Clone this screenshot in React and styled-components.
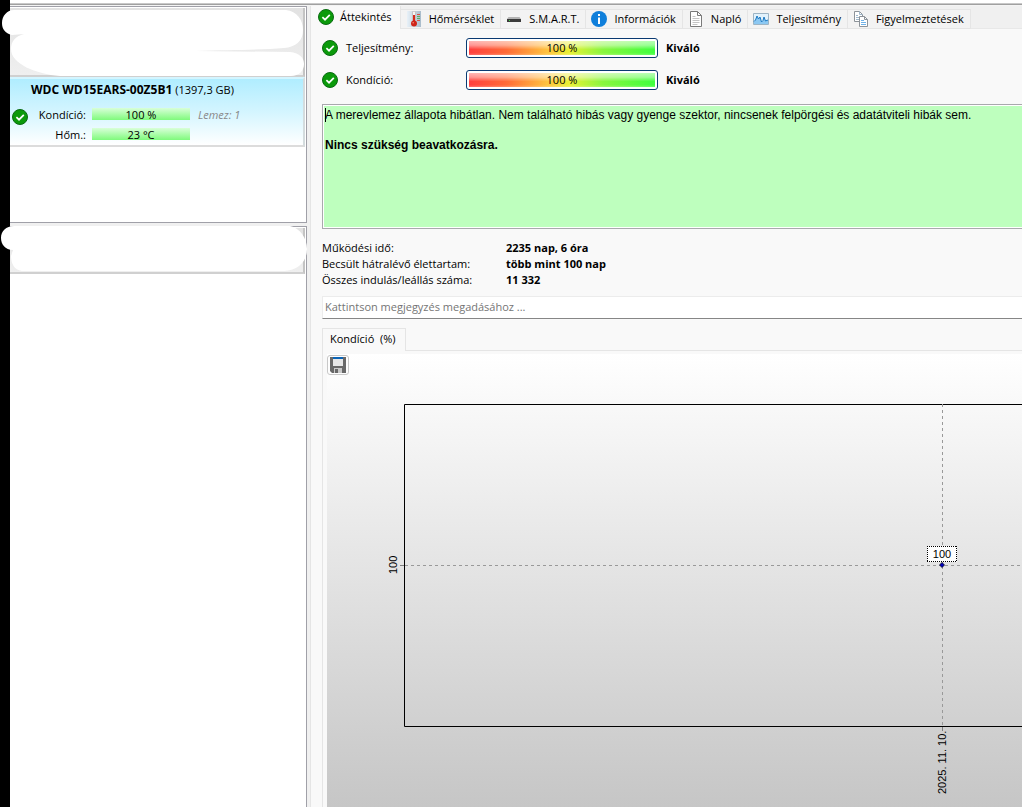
import React, { useState } from "react";
import styled, { createGlobalStyle } from "styled-components";

// ---------- STYLES ----------
const GlobalStyle = createGlobalStyle`
  * {
    box-sizing: border-box;
  }

  body {
    margin: 0;
    background: #f0f0f0;
    color: #000;
    font-family: "Open Sans", "Noto Sans", sans-serif;
    font-size: 11px;
    line-height: 16px;
    overflow: hidden;
  }

  button, input {
    font: inherit;
    color: inherit;
  }
`;

const Window = styled.div`
  display: flex;
  flex-direction: column;
  height: 100vh;
  border-left: 10px solid #000;
`;

const TopEdge = styled.div`
  flex: none;
  height: 6px;
  background: linear-gradient(#fff 3px, #c8c8c8 3px, #c8c8c8 4px, #a0a0a0 4px, #a0a0a0 5px, #f4f4f4 5px);
`;

const Columns = styled.div`
  display: flex;
  flex: 1;
  min-height: 0;
`;

const Sidebar = styled.aside`
  display: flex;
  flex-direction: column;
  flex: none;
  gap: 3px;
  width: 297px;
`;

const Pane = styled.section`
  position: relative;
  flex: ${(p) => (p.$grow ? "1" : "none")};
  min-height: 217px;
  padding: 1px 1px 0 0;
  background: #fff;
  border: 1px solid #a0a0a8;
  border-left: 0;
  border-bottom-width: ${(p) => (p.$grow ? "0" : "1px")};
`;

const HiddenItem = styled.div`
  height: ${(p) => p.$height}px;
  background: linear-gradient(#e2e2e2, #efefef);
  border-right: 2px solid #c4c4c4;
  border-bottom: 2px solid #d0d0d0;
`;

const Cover = styled.svg`
  position: absolute;
  top: -1px;
  left: -10px;
  pointer-events: none;
`;

const DiskItem = styled.div`
  padding: 3px 0 2px 2px;
  background: linear-gradient(#b0edff, #d4f5ff 50%, #fff);
  border-top: 2px solid #d4f5ff;
  border-right: 2px solid #d4dcde;
  border-bottom: 2px solid #dcdcdc;
`;

const DiskTitle = styled.div`
  padding-left: 19px;
  margin-bottom: 9px;

  b {
    font-size: 12px;
  }
`;

const DiskBody = styled.div`
  display: flex;
  align-items: flex-start;

  > svg {
    margin-top: 2px;
  }
`;

const DiskStats = styled.div`
  display: grid;
  grid-template-columns: 58px 98px auto;
  column-gap: 6px;
  row-gap: 4px;
`;

const StatLabel = styled.span`
  text-align: right;
`;

const StatBar = styled.span`
  height: 12px;
  margin-top: 1px;
  line-height: 14px;
  text-align: center;
  background: linear-gradient(#d9ffd9, #7ffa7c);
`;

const DiskNumber = styled.em`
  color: #888;
  padding-left: 2px;
`;

const Main = styled.main`
  flex: 1;
  min-width: 0;
  margin-left: 3px;
  background: #f9f9f9;
  border-left: 1px solid #e5e5e5;
`;

const TabBar = styled.div`
  display: flex;
  align-items: flex-end;
  height: 23px;
  background: #f0f0f0;
  box-shadow: inset 0 -1px #e8e8e8;
`;

const Tab = styled.button`
  display: flex;
  align-items: center;
  flex: none;
  gap: ${(p) => (p.$active ? "6px" : "7px")};
  height: ${(p) => (p.$active ? "23px" : "20px")};
  padding: ${(p) => (p.$active ? "0 8px 2px 7px" : "0 6px 0 5px")};
  white-space: nowrap;
  background: ${(p) => (p.$active ? "#f9f9f9" : "#f3f3f3")};
  border: 0 solid #e5e5e5;
  border-width: ${(p) => (p.$active ? "0 1px 0 0" : "1px 1px 1px 0")};
`;

const Overview = styled.div`
  padding: 9px 0 0 11px;
`;

const GaugeRow = styled.div`
  display: flex;
  align-items: center;
  gap: 8px;
  height: 20px;
  margin-bottom: 12px;
`;

const GaugeLabel = styled.span`
  width: 112px;
`;

const Gauge = styled.div`
  width: 192px;
  height: 20px;
  padding: 2px;
  background: #fff;
  border: 1px solid #0a3a72;
  border-radius: 3px;
`;

const GaugeFill = styled.div`
  height: 14px;
  line-height: 14px;
  text-align: center;
  background:
    linear-gradient(rgba(255, 255, 255, 0.65), rgba(255, 255, 255, 0.5) 30%, rgba(255, 255, 255, 0.1) 60%, rgba(255, 255, 255, 0.1) 85%, rgba(255, 255, 255, 0.3)),
    linear-gradient(90deg, #ff2a2a, #ff5a22 20%, #ffbc2a 42%, #e6f020 54%, #7cf52a 72%, #2aff2a);
`;

const StatusText = styled.div`
  height: 125px;
  margin-top: 14px;
  padding: 3px 2px;
  color: #000;
  font: 12px/15px "Liberation Sans", Arial, sans-serif;
  background: #beffbe;
  border: 1px solid #a9a9ad;
  border-right: 0;
  box-shadow: inset 1px 1px #fff, inset 0 -1px #fff;

  p {
    margin: 0 0 15px;
  }
`;

const Caret = styled.span`
  display: inline-block;
  width: 1px;
  height: 14px;
  margin-right: -1px;
  vertical-align: top;
  background: #000;
`;

const Facts = styled.dl`
  display: grid;
  grid-template-columns: 184px 1fr;
  margin: 11px 0 8px;

  dt, dd {
    margin: 0;
  }

  dd {
    font-weight: bold;
  }
`;

const CommentBox = styled.input`
  display: block;
  width: 100%;
  height: 23px;
  padding: 0 2px 2px;
  background: #fff;
  border: 1px solid #ececec;
  border-right: 0;
  border-bottom-color: #868686;
  border-radius: 0;

  &::placeholder {
    color: #757575;
    opacity: 1;
  }
`;

const ChartTabs = styled.div`
  display: flex;
  margin-top: 9px;
  box-shadow: inset 0 -1px #e5e5e5;
`;

const ChartTab = styled.button`
  height: 23px;
  padding: 0 9px 2px 7px;
  white-space: pre;
  background: #f9f9f9;
  border: 1px solid #e5e5e5;
  border-bottom: 0;
`;

const ChartPanel = styled.div`
  padding: 3px 0 0 4px;
  border-left: 1px solid #e5e5e5;
`;

const ChartArea = styled.div`
  position: relative;
  height: 460px;
  overflow: hidden;
  background: linear-gradient(#fff, #c5c5c5);
`;

const SaveButton = styled.button`
  position: absolute;
  top: 1px;
  left: 0;
  display: flex;
  align-items: center;
  justify-content: center;
  width: 22px;
  height: 20px;
  padding: 0;
  background: #fdfdfd;
  border: 1px solid #c8c8c8;
  border-radius: 3px;
`;

const ChartSvg = styled.svg`
  display: block;
  width: 100%;
  height: 100%;
  font-family: "Liberation Sans", Arial, sans-serif;
  font-size: 11px;
`;

// ---------- ICONS ----------
const CheckIcon = () => (
  <svg width="16" height="16" viewBox="0 0 16 16">
    <circle cx="8" cy="8" r="7.5" fill="#0b9a0b" stroke="#0a6b12" />
    <path d="M4.4 8.2 7 10.7 11.8 5.8" fill="none" stroke="#fff" strokeWidth="1.7" />
  </svg>
);

const ThermoIcon = () => (
  <svg width="16" height="16" viewBox="0 0 16 16">
    <defs>
      <linearGradient id="thermoBg" x2="1">
        <stop offset="0" stopColor="#e8f1f8" />
        <stop offset="1" stopColor="#a9bccb" />
      </linearGradient>
    </defs>
    <path d="M1 0h14v16H1z" fill="url(#thermoBg)" />
    <path d="M6.5 1.5a1.5 1.5 0 0 1 3 0V10h-3z" fill="#f5f5f5" stroke="#b5a8a8" strokeWidth=".6" />
    <path d="M7 4h2v8H7z" fill="#d62a1c" />
    <circle cx="8" cy="12.5" r="3" fill="#cf2519" />
    <circle cx="7.2" cy="11.8" r=".8" fill="#f08a7c" />
    <path d="M11 3.5h3M11 9.5h3" stroke="#d8564a" />
    <path d="M11 5.5h3M11 7.5h3" stroke="#5fae62" />
  </svg>
);

const DriveIcon = () => (
  <svg width="16" height="16" viewBox="0 0 16 16">
    <path d="M2.5 6h11L15 8H1z" fill="#b4b4b4" />
    <path d="M1 8h14v3H1z" fill="#3b3b3b" />
    <path d="M3 9h1v1H3z" fill="#3edc3e" />
  </svg>
);

const InfoIcon = () => (
  <svg width="16" height="16" viewBox="0 0 16 16">
    <circle cx="8" cy="8" r="8" fill="#0f7fdb" />
    <path d="M7 3h2v2H7zM7 6.5h2V13H7z" fill="#fff" />
  </svg>
);

const PageIcon = () => (
  <svg width="16" height="16" viewBox="0 0 16 16">
    <path d="M2.5.5h7l4 4v11h-11z" fill="#fff" stroke="#7a7a7a" />
    <path d="M9.5.5v4h4" fill="none" stroke="#7a7a7a" />
    <path d="M4.5 5.5h3M4.5 7.5h7M4.5 9.5h7M4.5 11.5h7M4.5 13.5h5" stroke="#c4c4c4" />
  </svg>
);

const GraphIcon = () => (
  <svg width="16" height="16" viewBox="0 0 16 16">
    <path d="M.5 2.5h15v11H.5z" fill="#e2f2fc" stroke="#9db4c4" />
    <path d="M1 10.5 2.5 9 4 5l1.5 3L7 6l1.5 5L10 9.5 11 6l1.5 4L15 9v4H1z" fill="#8cc8f2" />
    <path d="M1 10.5 2.5 9 4 5l1.5 3L7 6l1.5 5L10 9.5 11 6l1.5 4L15 9" fill="none" stroke="#1b78c2" />
  </svg>
);

const CopyIcon = () => (
  <svg width="16" height="16" viewBox="0 0 16 16">
    <path d="M1.5.5h5l3 3v7h-8z" fill="#fff" stroke="#8d9399" />
    <path d="M6.5.5v3h3M3 4.5h2M3 6.5h3M3 8.5h3" fill="none" stroke="#9fb8cc" />
    <path d="M6.5 5.5h5l3 3v7h-8z" fill="#fff" stroke="#8d9399" />
    <path d="M11.5 5.5v3h3" fill="none" stroke="#8d9399" />
    <path d="M8 9.5h3M8 11.5h5M8 13.5h5" stroke="#6fb2e8" />
  </svg>
);

const SaveIcon = () => (
  <svg width="16" height="16" viewBox="0 0 16 16">
    <path d="M0 0h16v16H2l-2-2z" fill="#686868" />
    <path d="M3 0h10v2H3z" fill="#0a63b5" />
    <path d="M3 2h10v7H3z" fill="#e6e6e6" />
    <path d="M4 11h8v5H4z" fill="#c9c9c9" />
    <path d="M5 12h3v4H5z" fill="#686868" />
  </svg>
);

const TABS = [
  { name: "Áttekintés", Icon: CheckIcon },
  { name: "Hőmérséklet", Icon: ThermoIcon },
  { name: "S.M.A.R.T.", Icon: DriveIcon },
  { name: "Információk", Icon: InfoIcon },
  { name: "Napló", Icon: PageIcon },
  { name: "Teljesítmény", Icon: GraphIcon },
  { name: "Figyelmeztetések", Icon: CopyIcon },
];

const GAUGES = ["Teljesítmény:", "Kondíció:"];

const FACTS = [
  ["Működési idő:", "2235 nap, 6 óra"],
  ["Becsült hátralévő élettartam:", "több mint 100 nap"],
  ["Összes indulás/leállás száma:", "11 332"],
];

// ---------- COMPONENTS ----------
function DiskList() {
  return (
    <Sidebar>
      <Pane>
        <HiddenItem $height={69} />
        <DiskItem>
          <DiskTitle>
            <b>WDC WD15EARS-00Z5B1</b> (1397,3 GB)
          </DiskTitle>
          <DiskBody>
            <CheckIcon />
            <DiskStats>
              <StatLabel>Kondíció:</StatLabel>
              <StatBar>100 %</StatBar>
              <DiskNumber>Lemez: 1</DiskNumber>
              <StatLabel>Hőm.:</StatLabel>
              <StatBar>23 °C</StatBar>
            </DiskStats>
          </DiskBody>
        </DiskItem>
        <Cover width="306" height="74" viewBox="0 6 306 74">
          <path
            d="M14 10H286C297 11 303 20 303 30C303 41 296 47 284 48C262 50 230 50 195 51L290 52C300 53 304 58 304 64C304 71 299 76 291 76H60C36 74 11 64 11 49C11 41 16 36 24 34L12 35C5 33 2 29 2 23C2 16 7 10 14 10Z"
            fill="#fff"
          />
        </Cover>
      </Pane>
      <Pane $grow>
        <HiddenItem $height={46} />
        <Cover width="307" height="50" viewBox="0 226 307 50">
          <path
            d="M14 226H290C300 228 307 238 307 249C307 262 298 270 284 271H22C14 270 11 263 11 256L13 250C5 250 1 244 1 238C1 231 6 226 14 226Z"
            fill="#fff"
          />
        </Cover>
      </Pane>
    </Sidebar>
  );
}

function HealthChart() {
  return (
    <ChartArea>
      <ChartSvg>
        <path d="M2000 50.5H77.5V372.5H2000" fill="none" stroke="#000" />
        <path d="M73 211.5H77M615.5 373V377" stroke="#808080" />
        <path d="M78 211.5H2000M615.5 50V372" stroke="#999" strokeDasharray="3 3" />
        <text transform="translate(70 220) rotate(-90)">100</text>
        <text transform="translate(619 440) rotate(-90)">2025. 11. 10.</text>
        <path d="M600 192h30v16h-30z" fill="#fff" />
        <path
          d="M600 192.5H630M600 207.5H630M600.5 192V208M629.5 192V208"
          stroke="#000"
          strokeDasharray="1 1"
          shapeRendering="crispEdges"
        />
        <text x="615" y="204" textAnchor="middle">
          100
        </text>
        <path d="M615 208.5l2.5 2.5-2.5 2.5-2.5-2.5z" fill="#0000c0" stroke="#000" strokeWidth=".7" />
      </ChartSvg>
      <SaveButton type="button" aria-label="Mentés">
        <SaveIcon />
      </SaveButton>
    </ChartArea>
  );
}

function App() {
  const [activeTab, setActiveTab] = useState(TABS[0].name);
  const [comment, setComment] = useState("");

  return (
    <Window>
      <GlobalStyle />
      <TopEdge />
      <Columns>
        {/* DISKS */}
        <DiskList />

        {/* DETAILS */}
        <Main>
          <TabBar>
            {TABS.map(({ name, Icon }) => (
              <Tab key={name} type="button" $active={name === activeTab} onClick={() => setActiveTab(name)}>
                <Icon />
                {name}
              </Tab>
            ))}
          </TabBar>

          <Overview>
            {GAUGES.map((label) => (
              <GaugeRow key={label}>
                <CheckIcon />
                <GaugeLabel>{label}</GaugeLabel>
                <Gauge>
                  <GaugeFill>100 %</GaugeFill>
                </Gauge>
                <b>Kiváló</b>
              </GaugeRow>
            ))}

            <StatusText>
              <p>
                <Caret />A merevlemez állapota hibátlan. Nem található hibás vagy gyenge szektor, nincsenek felpörgési
                és adatátviteli hibák sem.
              </p>
              <p>
                <b>Nincs szükség beavatkozásra.</b>
              </p>
            </StatusText>

            <Facts>
              {FACTS.map(([term, value]) => (
                <React.Fragment key={term}>
                  <dt>{term}</dt>
                  <dd>{value}</dd>
                </React.Fragment>
              ))}
            </Facts>

            <CommentBox
              aria-label="Megjegyzés"
              placeholder="Kattintson megjegyzés megadásához ..."
              value={comment}
              onChange={(e) => setComment(e.target.value)}
            />

            <ChartTabs>
              <ChartTab type="button">{"Kondíció  (%)"}</ChartTab>
            </ChartTabs>
            <ChartPanel>
              <HealthChart />
            </ChartPanel>
          </Overview>
        </Main>
      </Columns>
    </Window>
  );
}

export default App;
